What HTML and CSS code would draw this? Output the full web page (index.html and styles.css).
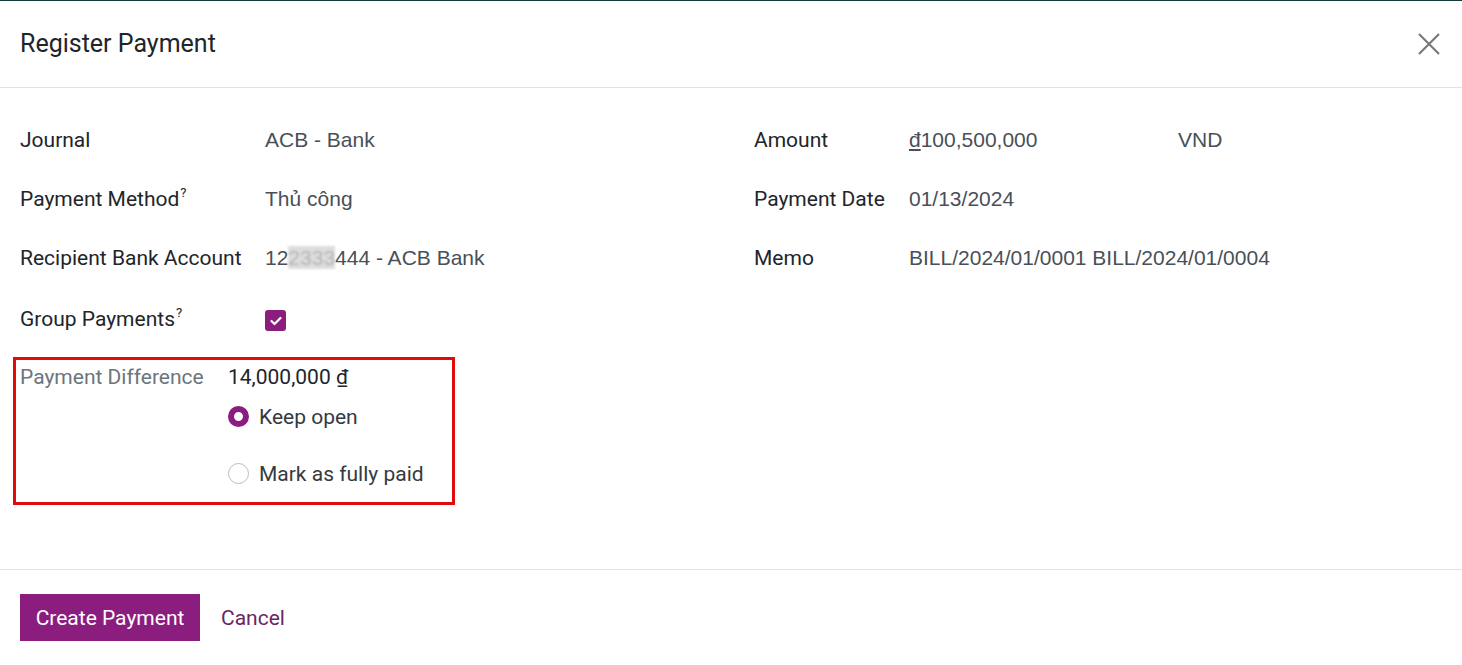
FILE: index.html
```html
<!DOCTYPE html>
<html lang="en">
<head>
<meta charset="utf-8">
<title>Register Payment</title>
<link rel="stylesheet" href="styles.css">
</head>
<body>
<div class="modal">
  <header class="modal-header">
    <h1 class="modal-title">Register Payment</h1>
    <button class="close" aria-label="Close">
      <svg width="22" height="22" viewBox="0 0 22 22"><path d="M1 1 L21 21 M21 1 L1 21" stroke="#7a7a7a" stroke-width="2.2" fill="none"/></svg>
    </button>
  </header>
  <main class="modal-body">
    <div class="cols">
      <div class="col col-left">
        <div class="row"><span class="label">Journal</span><span class="value">ACB - Bank</span></div>
        <div class="row"><span class="label">Payment Method<sup>?</sup></span><span class="value">Thủ công</span></div>
        <div class="row"><span class="label">Recipient Bank Account</span><span class="value">12<span class="blur">2333</span>444 - ACB Bank</span></div>
        <div class="row row-group"><span class="label">Group Payments<sup>?</sup></span><span class="value"><span class="checkbox"><svg width="12" height="10" viewBox="0 0 12 10"><path d="M1.5 5 L4.5 8 L10.5 2" stroke="#fff" stroke-width="2.2" fill="none" stroke-linecap="round" stroke-linejoin="round"/></svg></span></span></div>
      </div>
      <div class="col col-right">
        <div class="row"><span class="label">Amount</span><span class="value amount"><span class="amount-num"><u>đ</u>100,500,000</span><span class="currency">VND</span></span></div>
        <div class="row"><span class="label">Payment Date</span><span class="value">01/13/2024</span></div>
        <div class="row"><span class="label">Memo</span><span class="value">BILL/2024/01/0001 BILL/2024/01/0004</span></div>
      </div>
    </div>
    <div class="diff-box">
      <span class="diff-label">Payment Difference</span>
      <div class="diff-content">
        <div class="diff-amount">14,000,000 <u>₫</u></div>
        <label class="radio-row"><span class="radio checked"></span>Keep open</label>
        <label class="radio-row"><span class="radio"></span>Mark as fully paid</label>
      </div>
    </div>
  </main>
  <footer class="modal-footer">
    <button class="btn-primary">Create Payment</button>
    <button class="btn-link">Cancel</button>
  </footer>
</div>
</body>
</html>
```

FILE: styles.css
```css
* { box-sizing: border-box; }
html, body { margin: 0; padding: 0; background: #fff; }
body {
  font-family: Roboto, "Noto Sans", sans-serif;
  color: #212529;
  border-top: 1px solid #143a3a;
  height: 665px;
  overflow: hidden;
}
.modal { display: flex; flex-direction: column; height: 664px; }
.modal-header {
  height: 87px;
  display: flex;
  align-items: center;
  justify-content: space-between;
  padding: 0 22px 0 20px;
  border-bottom: 1px solid #dee2e6;
}
.modal-title { margin: 0; font-weight: 400; font-size: 25px; color: #212529; padding-bottom: 2px; }
.close { background: none; border: 0; padding: 0; display: flex; }
.modal-body { height: 482px; padding: 22px 20px 0 20px; border-bottom: 1px solid #dee2e6; }
.cols { display: flex; }
.col-left { width: 734px; }
.col-right { flex: 1; }
.row { display: flex; align-items: center; height: 59px; }
.row-group { margin-top: 2px; }
.col-left .label { width: 245px; }
.col-right .label { width: 155px; }
.label { font-size: 21px; color: #212529; }
.label sup { font-size: 13px; position: relative; top: -1px; margin-left: 1px; }
.value { font-family: "Liberation Sans", Arial, sans-serif; font-size: 21px; color: #495057; }
.blur { color: #b5b5b5; background: #ddd; filter: blur(1px); }
.amount { display: flex; }
.amount-num { width: 269px; }
.checkbox {
  display: inline-flex; align-items: center; justify-content: center;
  width: 21px; height: 21px; border-radius: 3px; background: #8b1d7f;
  vertical-align: middle; margin-top: 3px;
}
.diff-box {
  margin-left: -7px;
  margin-top: 9px;
  width: 442px;
  height: 148px;
  border: 3px solid #e00c0c;
  display: flex;
  padding: 5px 0 0 4px;
}
.diff-label { width: 208px; font-size: 21px; line-height: 25px; color: #6c757d; }
.diff-content { display: flex; flex-direction: column; }
.diff-amount { font-size: 21px; line-height: 25px; color: #212529; height: 32px; }
.radio-row { display: flex; align-items: center; font-size: 21px; color: #343a40; height: 39px; }
.radio-row + .radio-row { margin-top: 18px; }
.radio {
  width: 21px; height: 21px; border-radius: 50%;
  border: 1px solid #bbb; margin-right: 10px; background: #fff; flex: none;
}
.radio.checked { border: 6px solid #8b1d7f; }
.modal-footer { display: flex; align-items: center; padding: 24px 20px 0 20px; }
.btn-primary {
  font-family: Roboto, sans-serif; font-size: 21px; color: #fff;
  background: #8b1d7f; border: 0; height: 47px; width: 180px; padding: 0;
}
.btn-link {
  font-family: Roboto, sans-serif; font-size: 21px; color: #6c2563;
  background: none; border: 0; padding: 0 0 0 21px;
}
```
